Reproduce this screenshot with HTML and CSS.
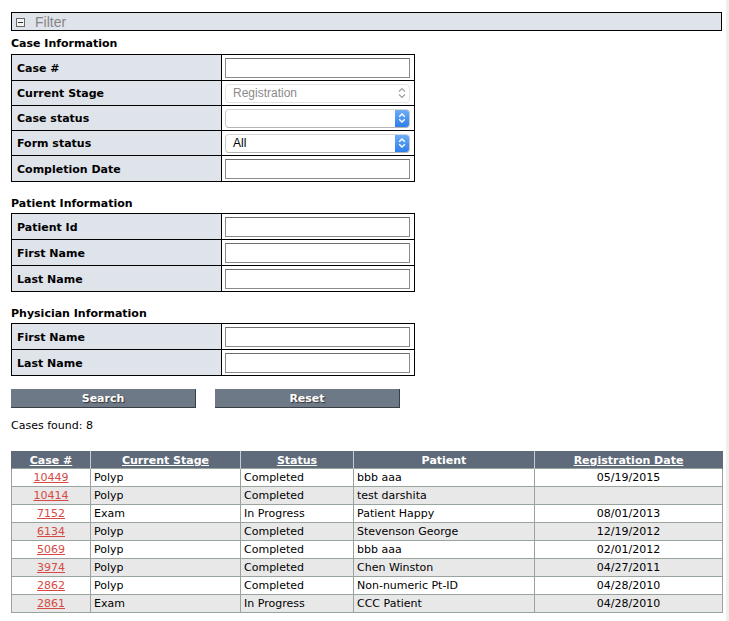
FILE: index.html
```html
<!DOCTYPE html>
<html>
<head>
<meta charset="utf-8">
<title>Cases</title>
<link rel="stylesheet" href="styles.css">
</head>
<body>
<div class="page">
  <div class="filter-bar">
    <svg class="toggle" width="9" height="9" viewBox="0 0 9 9"><rect x="0.5" y="0.5" width="8" height="8" fill="#f4f4f4" stroke="#666"/><rect x="2" y="4" width="5" height="1" fill="#333"/></svg>
    <span class="filter-label">Filter</span>
  </div>

  <div class="section-title first">Case Information</div>
  <table class="form-table">
    <tr class="tall"><th>Case #</th><td><input class="text-input" type="text"></td></tr>
    <tr><th>Current Stage</th><td>
      <div class="select disabled"><span class="select-value">Registration</span><span class="select-arrow"><svg width="8" height="12" viewBox="0 0 8 12"><path d="M1 4.5 L4 1.5 L7 4.5 M1 7.5 L4 10.5 L7 7.5" fill="none" stroke="#a0a0a0" stroke-width="1.2"/></svg></span></div>
    </td></tr>
    <tr><th>Case status</th><td>
      <div class="select"><span class="select-value"></span><span class="select-btn"><svg width="8" height="12" viewBox="0 0 8 12"><path d="M1.2 4.8 L4 2 L6.8 4.8 M1.2 7.2 L4 10 L6.8 7.2" fill="none" stroke="#fff" stroke-width="1.4"/></svg></span></div>
    </td></tr>
    <tr><th>Form status</th><td>
      <div class="select"><span class="select-value">All</span><span class="select-btn"><svg width="8" height="12" viewBox="0 0 8 12"><path d="M1.2 4.8 L4 2 L6.8 4.8 M1.2 7.2 L4 10 L6.8 7.2" fill="none" stroke="#fff" stroke-width="1.4"/></svg></span></div>
    </td></tr>
    <tr class="tall"><th>Completion Date</th><td><input class="text-input" type="text"></td></tr>
  </table>

  <div class="section-title">Patient Information</div>
  <table class="form-table">
    <tr class="tall"><th>Patient Id</th><td><input class="text-input" type="text"></td></tr>
    <tr class="tall"><th>First Name</th><td><input class="text-input" type="text"></td></tr>
    <tr class="tall"><th>Last Name</th><td><input class="text-input" type="text"></td></tr>
  </table>

  <div class="section-title">Physician Information</div>
  <table class="form-table">
    <tr class="tall"><th>First Name</th><td><input class="text-input" type="text"></td></tr>
    <tr class="tall"><th>Last Name</th><td><input class="text-input" type="text"></td></tr>
  </table>

  <div class="buttons">
    <button class="btn" type="button">Search</button>
    <button class="btn" type="button">Reset</button>
  </div>

  <div class="found">Cases found: 8</div>

  <table class="results">
    <thead>
      <tr>
        <th class="c-case"><a href="#">Case #</a></th>
        <th class="c-stage"><a href="#">Current Stage</a></th>
        <th class="c-status"><a href="#">Status</a></th>
        <th class="c-patient">Patient</th>
        <th class="c-date"><a href="#">Registration Date</a></th>
      </tr>
    </thead>
    <tbody>
      <tr><td class="center"><a href="#">10449</a></td><td>Polyp</td><td>Completed</td><td>bbb aaa</td><td class="center">05/19/2015</td></tr>
      <tr class="alt"><td class="center"><a href="#">10414</a></td><td>Polyp</td><td>Completed</td><td>test darshita</td><td class="center"></td></tr>
      <tr><td class="center"><a href="#">7152</a></td><td>Exam</td><td>In Progress</td><td>Patient Happy</td><td class="center">08/01/2013</td></tr>
      <tr class="alt"><td class="center"><a href="#">6134</a></td><td>Polyp</td><td>Completed</td><td>Stevenson George</td><td class="center">12/19/2012</td></tr>
      <tr><td class="center"><a href="#">5069</a></td><td>Polyp</td><td>Completed</td><td>bbb aaa</td><td class="center">02/01/2012</td></tr>
      <tr class="alt"><td class="center"><a href="#">3974</a></td><td>Polyp</td><td>Completed</td><td>Chen Winston</td><td class="center">04/27/2011</td></tr>
      <tr><td class="center"><a href="#">2862</a></td><td>Polyp</td><td>Completed</td><td>Non-numeric Pt-ID</td><td class="center">04/28/2010</td></tr>
      <tr class="alt"><td class="center"><a href="#">2861</a></td><td>Exam</td><td>In Progress</td><td>CCC Patient</td><td class="center">04/28/2010</td></tr>
    </tbody>
  </table>
</div>
</body>
</html>
```

FILE: styles.css
```css
html {
  background: #fff;
  border-right: 3px solid #efefef;
  min-height: 100%;
}
body {
  margin: 0;
  font-family: "DejaVu Sans", Verdana, sans-serif;
  font-size: 11px;
  color: #000;
}
.page {
  padding: 12px 0 0 11px;
  width: 712px;
}
.filter-bar {
  width: 709px;
  height: 17px;
  border: 1px solid #000;
  background: #dfe3ea;
  display: flex;
  align-items: center;
}
.toggle {
  margin: 1px 0 0 4px;
}
.filter-label {
  margin-left: 10px;
  font-family: "Liberation Sans", Arial, sans-serif;
  font-size: 14px;
  color: #858585;
}
.section-title {
  font-weight: bold;
  line-height: 14px;
  margin: 15px 0 2px;
}
.section-title.first {
  margin-top: 6px;
  margin-bottom: 3px;
}
.form-table {
  border-collapse: collapse;
  border: 1px solid #000;
  width: 404px;
}
.form-table th,
.form-table td {
  border: 1px solid #000;
  padding: 0 4px;
  height: 24px;
  vertical-align: middle;
}
.form-table tr.tall th,
.form-table tr.tall td {
  height: 25px;
}
.form-table th {
  width: 201px;
  text-align: left;
  background: #dfe3ea;
  font-weight: bold;
  padding-left: 5px;
}
.form-table tr.tall th {
  padding-top: 1px;
  height: 24px;
}
.form-table td {
  padding-left: 3px;
}
.text-input {
  display: block;
  box-sizing: border-box;
  width: 185px;
  height: 20px;
  margin: 0;
  border: 1px solid #8a8a8a;
  border-top-color: #6f6f6f;
  background: #fff;
  padding: 0 3px;
}
.select {
  display: flex;
  align-items: stretch;
  box-sizing: border-box;
  width: 185px;
  height: 19px;
  border: 1px solid #c9c9c9;
  border-top-color: #d6d6d6;
  border-bottom-color: #b5b5b5;
  border-radius: 4px;
  background: #fff;
  overflow: hidden;
  font-family: "Liberation Sans", Arial, sans-serif;
  font-size: 12px;
}
.select-value {
  flex: 1;
  display: flex;
  align-items: center;
  padding-left: 7px;
  color: #000;
}
.select.disabled {
  border-color: #e3e3e3;
}
.select.disabled .select-value {
  color: #8a8a8a;
}
.select-arrow {
  width: 14px;
  display: flex;
  align-items: center;
  justify-content: center;
}
.select-btn {
  width: 14px;
  display: flex;
  align-items: center;
  justify-content: center;
  background: linear-gradient(#6cadf7, #2e7fe9);
}
.buttons {
  display: flex;
  gap: 19px;
  margin-top: 13px;
}
.btn {
  box-sizing: border-box;
  width: 185px;
  height: 19px;
  margin: 0;
  padding: 0;
  border: 0;
  border-right: 1px solid #3a3f46;
  border-bottom: 1px solid #3a3f46;
  background: #6e7987;
  color: #fff;
  font-family: "DejaVu Sans", Verdana, sans-serif;
  font-size: 11px;
  font-weight: bold;
  text-shadow: 1px 1px 1px #333;
}
.found {
  margin-top: 11px;
  line-height: 14px;
}
.results {
  margin-top: 18px;
  border-collapse: collapse;
  width: 712px;
}
.results th {
  background: #5f6b7b;
  color: #fff;
  font-weight: bold;
  height: 17px;
  padding: 0 3px;
  border-left: 1px solid #c8ccd2;
  border-right: 1px solid #c8ccd2;
  vertical-align: bottom;
  line-height: 14px;
}
.results th:first-child { border-left-color: #5f6b7b; }
.results th:last-child { border-right-color: #5f6b7b; }
.results th a {
  color: #fff;
  text-decoration: underline;
}
.c-case { width: 72px; }
.c-stage { width: 143px; }
.c-status { width: 106px; }
.c-patient { width: 174px; }
.results td {
  border: 1px solid #9aa49f;
  height: 16px;
  padding: 1px 3px 0;
  line-height: 14px;
  white-space: nowrap;
}
.results tr.alt td {
  background: #e8e8e8;
}
.results td.center {
  text-align: center;
}
.results td a {
  color: #d64a45;
  text-decoration: underline;
}
```
